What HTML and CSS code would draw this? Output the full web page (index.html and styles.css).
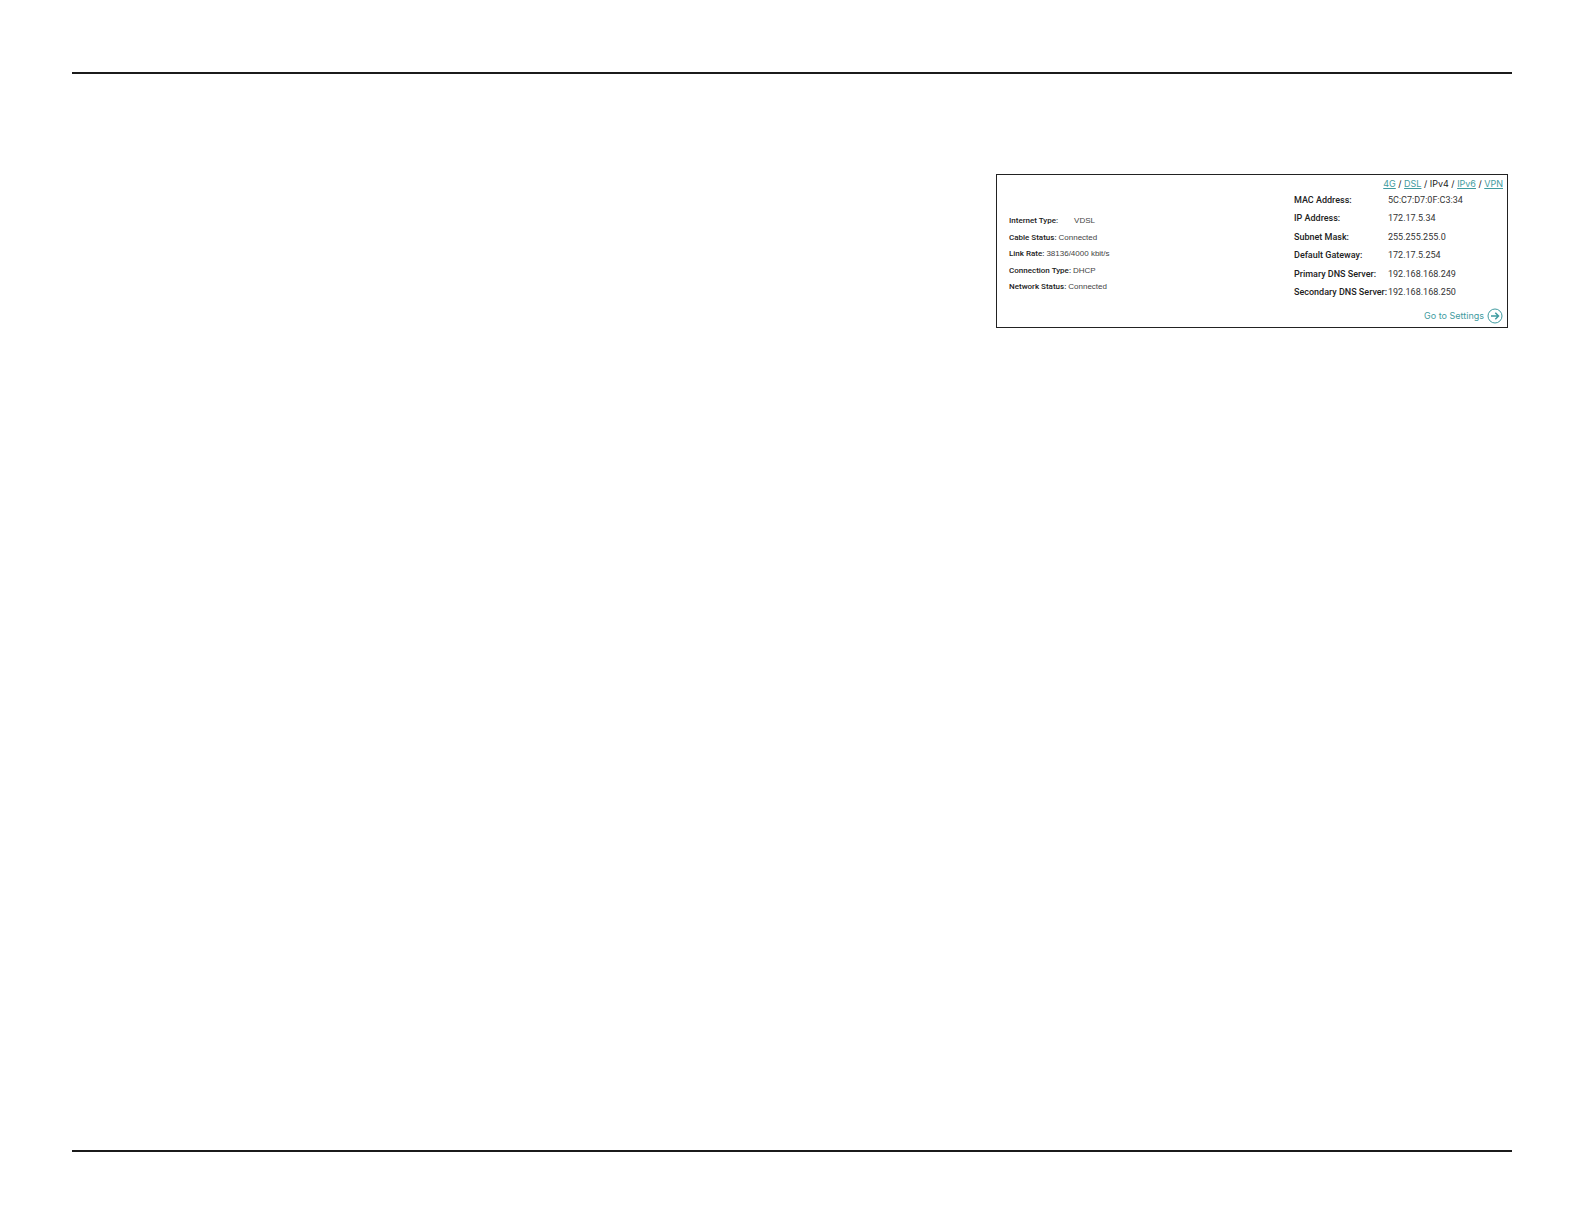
FILE: index.html
```html
<!DOCTYPE html>
<html lang="en">
<head>
    <meta charset="UTF-8">
    <meta name="viewport" content="width=device-width, initial-scale=1.0">
    <title>Internet Status</title>
    <link rel="stylesheet" href="styles.css">
</head>
<body>

<main class="page">
    <section class="panel">
        <dl class="status">
            <div class="row"><dt>Internet Type:</dt><dd class="type">VDSL</dd></div>
            <div class="row"><dt>Cable Status:</dt><dd>Connected</dd></div>
            <div class="row"><dt>Link Rate:</dt><dd>38136/4000 kbit/s</dd></div>
            <div class="row"><dt>Connection Type:</dt><dd>DHCP</dd></div>
            <div class="row"><dt>Network Status:</dt><dd>Connected</dd></div>
        </dl>

        <div class="details">
            <nav class="tabs">
                <a href="#4g">4G</a> / <a href="#dsl">DSL</a> / <span>IPv4</span> / <a href="#ipv6">IPv6</a> / <a href="#vpn">VPN</a>
            </nav>
            <dl class="addresses">
                <dt>MAC Address:</dt><dd>5C:C7:D7:0F:C3:34</dd>
                <dt>IP Address:</dt><dd>172.17.5.34</dd>
                <dt>Subnet Mask:</dt><dd>255.255.255.0</dd>
                <dt>Default Gateway:</dt><dd>172.17.5.254</dd>
                <dt>Primary DNS Server:</dt><dd>192.168.168.249</dd>
                <dt>Secondary DNS Server:</dt><dd>192.168.168.250</dd>
            </dl>
            <a class="settings" href="#settings">
                Go to Settings
                <svg viewBox="0 0 16 16" width="16" height="16" fill="none" stroke="currentColor">
                    <circle cx="8" cy="8" r="7"/>
                    <path d="M4 8h7.5M8.3 4.8L11.5 8l-3.2 3.2" stroke-width="1.5"/>
                </svg>
            </a>
        </div>
    </section>
</main>

</body>
</html>
```

FILE: styles.css
```css
* {
    box-sizing: border-box;
}

body {
    margin: 0;
    padding: 72px;
    min-height: 100vh;
    display: flex;
    background-color: #fff;
    color: #222;
    font-family: Roboto, sans-serif;
}

.page {
    flex: 1;
    padding: 100px 4px;
    border-top: 2px solid #1b1b1b;
    border-bottom: 2px solid #1b1b1b;
}

.panel {
    display: flex;
    justify-content: space-between;
    max-width: 512px;
    min-height: 154px;
    margin-left: auto;
    padding: 0 4px 0 12px;
    border: 1px solid #222;
}

dl,
dd {
    margin: 0;
}

dt {
    font-weight: 500;
}

.status {
    display: flex;
    flex-direction: column;
    justify-content: space-between;
    height: 78px;
    margin-top: 40px;
    font-size: 8px;
    line-height: 12px;
}

.row {
    display: flex;
    gap: 2px;
}

.status dd {
    color: #444;
    font-family: "Liberation Sans", sans-serif;
}

.status .type {
    margin-left: 14px;
}

.details {
    display: flex;
    flex-direction: column;
    width: 209px;
    font-size: 9px;
    line-height: 12px;
}

.tabs {
    margin-top: 3px;
    font-family: Inter, sans-serif;
    text-align: right;
}

a {
    color: #3f9ba0;
}

.addresses {
    display: grid;
    grid-template-columns: 94px 1fr;
    align-content: space-between;
    height: 104px;
    margin-top: 4px;
    white-space: nowrap;
}

.addresses dd {
    color: #333;
}

.settings {
    display: flex;
    align-items: center;
    justify-content: flex-end;
    gap: 3px;
    margin-top: auto;
    margin-bottom: 3px;
    font-family: Inter, sans-serif;
    text-decoration: none;
}
```
